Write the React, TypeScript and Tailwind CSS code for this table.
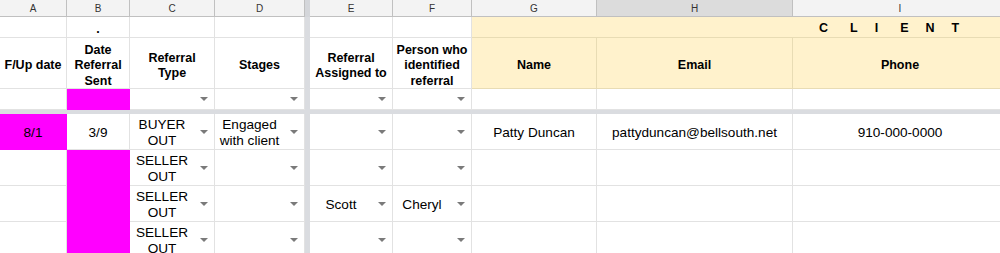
import { FC, ReactNode } from 'react'

const Arrow: FC = () => (
  <svg width="8" height="4" viewBox="0 0 8 4" className="block">
    <polygon points="0,0 8,0 4,4" fill="#7a7a7a" />
  </svg>
)

type CellProps = {
  children?: ReactNode
  className?: string
  innerCls?: string
  arrow?: boolean
  tone?: 'white' | 'pink' | 'yellow'
}

const Cell: FC<CellProps> = ({ children, className = '', innerCls = '', arrow, tone = 'white' }) => {
  const toneCls =
    tone === 'pink'
      ? 'bg-[#ff00ff] border-[#ff00ff]'
      : tone === 'yellow'
        ? 'bg-[#fff2cc] border-[#e8dcb4]'
        : 'bg-white border-[#e2e2e2]'
  return (
    <div className={`flex items-center border-r border-b overflow-hidden ${toneCls} ${className}`}>
      <div className={`flex-1 min-w-0 text-center leading-[15.3px] px-[2px] ${innerCls}`}>{children}</div>
      {arrow && (
        <div className="w-[20px] shrink-0 flex justify-center">
          <Arrow />
        </div>
      )}
    </div>
  )
}

const ColHead: FC<{ label: string; active?: boolean }> = ({ label, active }) => (
  <div
    className={`flex items-center justify-center border-r border-b border-[#c0c0c0] text-[10px] text-[#333] ${
      active ? 'bg-[#dcdcdc]' : 'bg-[#f3f3f3]'
    }`}
  >
    {label}
  </div>
)

const Freeze: FC = () => <div className="bg-[#dadce0]" />

const HeadCell: FC<{ children: ReactNode; tone?: 'white' | 'yellow' }> = ({ children, tone = 'white' }) => (
  <Cell tone={tone} className="font-bold text-[12.5px]" innerCls="translate-y-[3px]">
    {children}
  </Cell>
)

const DataRow: FC<{ e?: string; f?: string; children?: ReactNode }> = ({ e, f, children }) => (
  <>
    {children}
    <Freeze />
    <Cell arrow innerCls="translate-y-[1px]">{e}</Cell>
    <Cell arrow innerCls="translate-y-[1px]">{f}</Cell>
    <Cell />
    <Cell />
    <Cell />
  </>
)

const App: FC = () => {
  return (
    <div className="w-[1000px] h-[253px] overflow-hidden bg-white text-black font-['Liberation_Sans',Arial,sans-serif] text-[13.6px]">
      <div className="grid w-[1008px] grid-cols-[67px_63px_85px_90px_5px_83px_79px_125px_196px_215px] grid-rows-[17px_21px_51px_21px_4px_36px_36px_36px_36px]">
        {/* column letters */}
        <ColHead label="A" />
        <ColHead label="B" />
        <ColHead label="C" />
        <ColHead label="D" />
        <div className="bg-[#d4d6da]" />
        <ColHead label="E" />
        <ColHead label="F" />
        <ColHead label="G" />
        <ColHead label="H" active />
        <ColHead label="I" />

        {/* row 1 */}
        <Cell />
        <Cell className="font-bold text-[12.5px]">
          <span className="relative top-[3px]">.</span>
        </Cell>
        <Cell />
        <Cell />
        <Freeze />
        <Cell />
        <Cell />
        <div className="col-span-3 flex items-center bg-[#fff2cc] border-b border-[#e8dcb4] pl-[347px] pt-[3px] font-bold text-[12.5px]">
          <span>C</span>
          <span className="ml-[22px]">L</span>
          <span className="ml-[17px]">I</span>
          <span className="ml-[22px]">E</span>
          <span className="ml-[17px]">N</span>
          <span className="ml-[17px]">T</span>
        </div>

        {/* row 2: headings */}
        <HeadCell>F/Up date</HeadCell>
        <HeadCell>
          Date
          <br />
          Referral
          <br />
          Sent
        </HeadCell>
        <HeadCell>
          Referral
          <br />
          Type
        </HeadCell>
        <HeadCell>Stages</HeadCell>
        <Freeze />
        <HeadCell>
          Referral
          <br />
          Assigned to
        </HeadCell>
        <HeadCell>
          Person who
          <br />
          identified
          <br />
          referral
        </HeadCell>
        <HeadCell tone="yellow">Name</HeadCell>
        <HeadCell tone="yellow">Email</HeadCell>
        <HeadCell tone="yellow">Phone</HeadCell>

        {/* row 3: filters */}
        <DataRow>
          <Cell />
          <Cell tone="pink" />
          <Cell arrow />
          <Cell arrow />
        </DataRow>

        {/* frozen row divider */}
        <div className="col-span-10 bg-[#dadce0]" />

        {/* row 4 */}
        <Cell tone="pink" innerCls="translate-y-[1px]">8/1</Cell>
        <Cell innerCls="translate-y-[1px]">3/9</Cell>
        <Cell arrow innerCls="translate-y-[1px]">
          BUYER
          <br />
          OUT
        </Cell>
        <Cell arrow innerCls="translate-y-[1px]">
          Engaged
          <br />
          with client
        </Cell>
        <Freeze />
        <Cell arrow />
        <Cell arrow />
        <Cell innerCls="translate-y-[1px]">Patty Duncan</Cell>
        <Cell innerCls="translate-y-[1px]">pattyduncan@bellsouth.net</Cell>
        <Cell innerCls="translate-y-[1px]">910-000-0000</Cell>

        {/* rows 5-7 */}
        <DataRow>
          <Cell />
          <Cell tone="pink" />
          <Cell arrow innerCls="translate-y-[1px]">
            SELLER
            <br />
            OUT
          </Cell>
          <Cell arrow />
        </DataRow>
        <DataRow e="Scott" f="Cheryl">
          <Cell />
          <Cell tone="pink" />
          <Cell arrow innerCls="translate-y-[1px]">
            SELLER
            <br />
            OUT
          </Cell>
          <Cell arrow />
        </DataRow>
        <DataRow>
          <Cell />
          <Cell tone="pink" />
          <Cell arrow innerCls="translate-y-[1px]">
            SELLER
            <br />
            OUT
          </Cell>
          <Cell arrow />
        </DataRow>
      </div>
    </div>
  )
}

export default App
